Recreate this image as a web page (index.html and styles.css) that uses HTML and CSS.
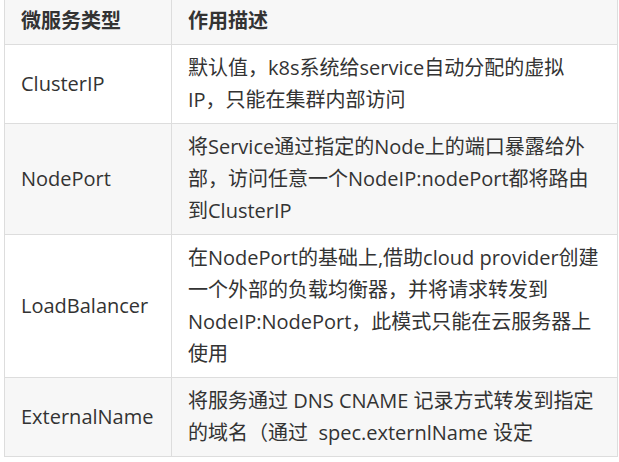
FILE: index.html
```html
<!DOCTYPE html>
<html lang="zh">
<head>
<meta charset="utf-8">
<link rel="stylesheet" href="styles.css">
</head>
<body>
<div class="wrap">
<table class="svc">
  <thead>
    <tr><th class="c1">微服务类型</th><th class="c2">作用描述</th></tr>
  </thead>
  <tbody>
    <tr><td>ClusterIP</td><td>默认值，k8s系统给service自动分配的虚拟IP，只能在集群内部访问</td></tr>
    <tr><td>NodePort</td><td>将Service通过指定的Node上的端口暴露给外部，访问任意一个NodeIP:nodePort都将路由到ClusterIP</td></tr>
    <tr><td>LoadBalancer</td><td>在NodePort的基础上,借助cloud provider创建一个外部的负载均衡器，并将请求转发到NodeIP:NodePort，此模式只能在云服务器上使用</td></tr>
    <tr><td>ExternalName</td><td>将服务通过 DNS CNAME 记录方式转发到指定的域名（通过&nbsp; spec.externlName 设定</td></tr>
  </tbody>
</table>
</div>
</body>
</html>
```

FILE: styles.css
```css
html, body {
  margin: 0;
  padding: 0;
  background: #ffffff;
}
.wrap {
  margin: -3px 0 0 4px;
}
.svc {
  border-collapse: collapse;
  width: 614px;
  table-layout: fixed;
  font-family: "Open Sans", "Noto Sans CJK SC", sans-serif;
  font-size: 20px;
  line-height: 32px;
  color: #333333;
}
.svc th, .svc td {
  border: 1px solid #dddddd;
  padding: 7px 16px;
  text-align: left;
  vertical-align: middle;
}
.svc th {
  font-weight: bold;
  background: #f7f7f7;
}
.svc .c1 {
  width: 134px;
}
.svc tbody tr:nth-child(even) td {
  background: #f7f7f7;
}
```
